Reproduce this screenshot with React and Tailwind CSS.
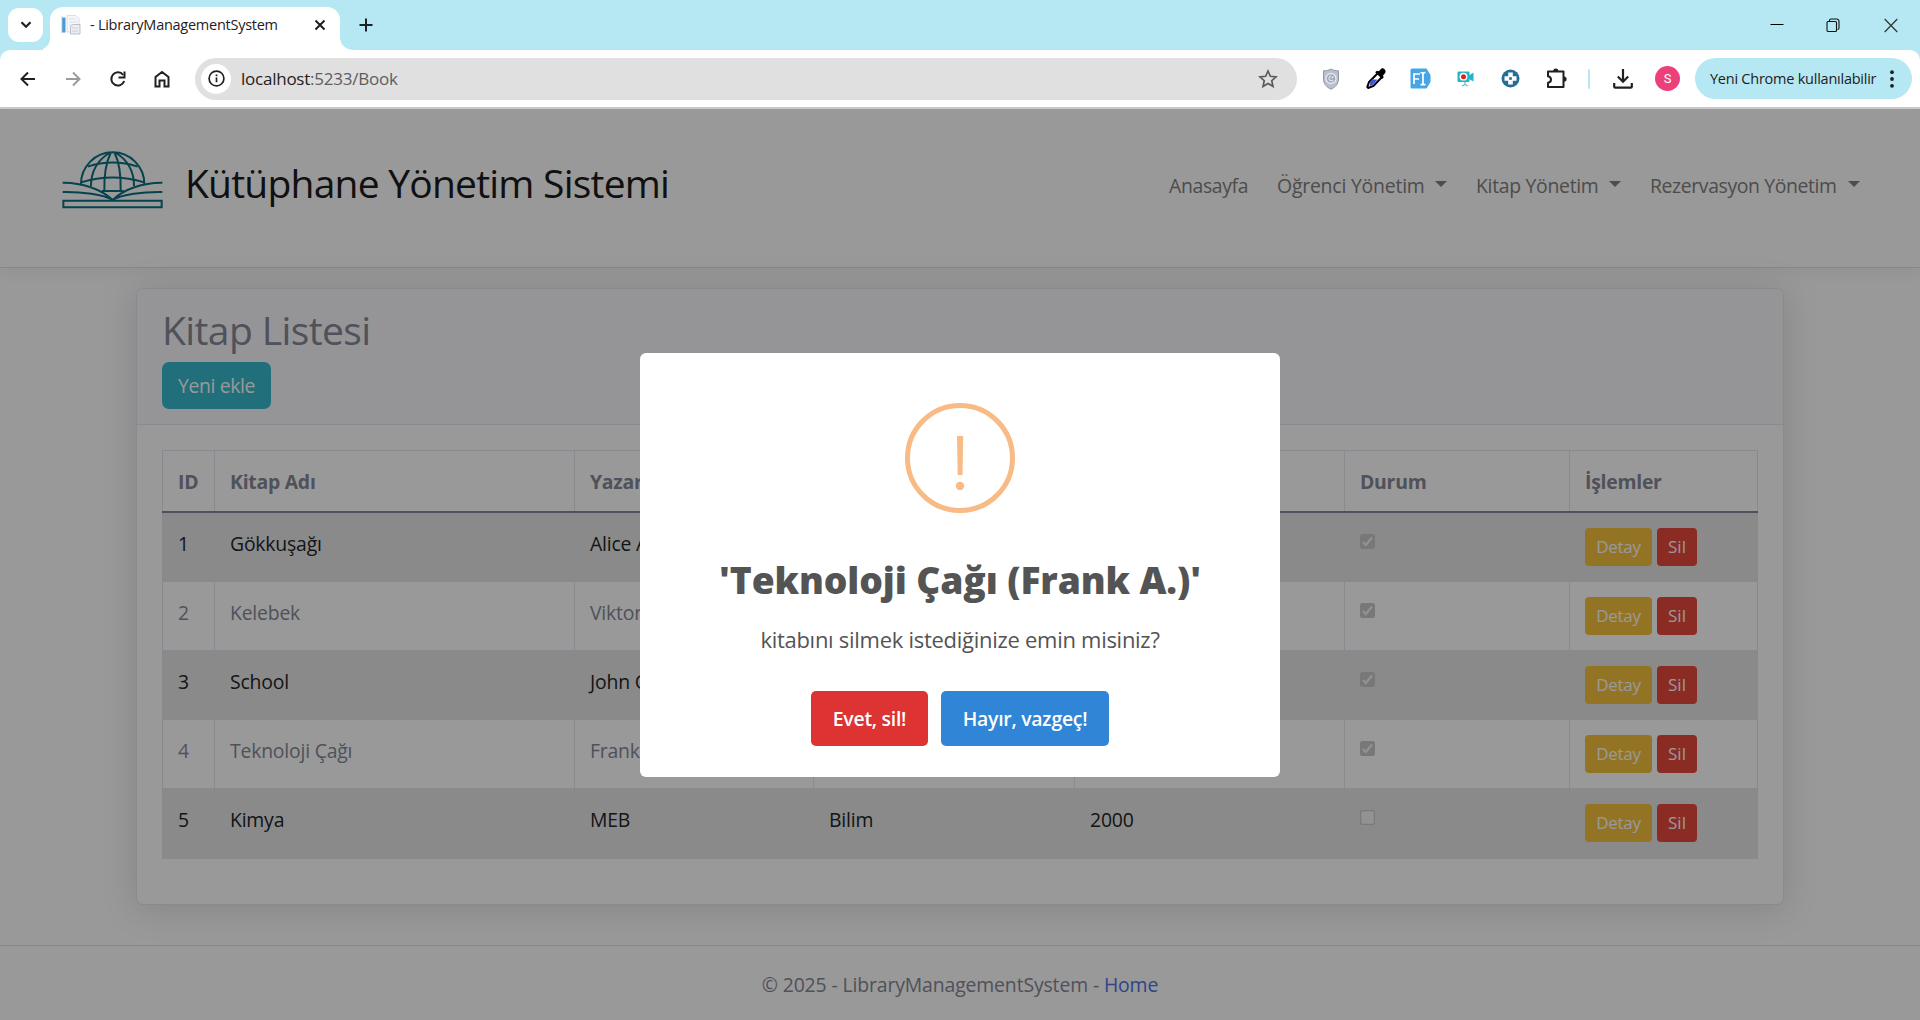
import React from "react";

const books = [
  { id: 1, title: "Gökkuşağı", author: "Alice A.", active: true },
  { id: 2, title: "Kelebek", author: "Viktor", active: true },
  { id: 3, title: "School", author: "John O.", active: true },
  { id: 4, title: "Teknoloji Çağı", author: "Frank", active: true },
  { id: 5, title: "Kimya", author: "MEB", genre: "Bilim", year: "2000", active: false },
];

function Cell({ children }) {
  return <div className="flex w-[45px] shrink-0 items-center justify-center">{children}</div>;
}

function TabStrip() {
  return (
    <div className="flex h-[50px] items-start bg-[#b5e8f3]">
      <div className="ml-2 mt-2 flex h-[34px] w-[35px] items-center justify-center rounded-[11px] bg-white">
        <svg width="12" height="8" viewBox="0 0 12 8" fill="none" stroke="#1f2023" strokeWidth="2.2">
          <path d="M1.5 1.3 6 5.8l4.5-4.5" />
        </svg>
      </div>
      <svg className="mt-[38px]" width="7" height="12" viewBox="0 0 7 12">
        <path d="M7 0v12H-6C2 12 7 7 7 0z" fill="#fff" />
      </svg>
      <div className="mt-[7px] flex h-[43px] w-[290px] items-center rounded-t-[13px] bg-white pb-[7px] pl-[11px]">
        <svg width="20" height="20" viewBox="0 0 20 20">
          <path d="M0 1h1.500v17H0z" fill="#dfe5ea" />
          <path d="M1.200 2.500h3.300v15H1.200z" fill="#4a9bd0" />
          <path d="M6 .5h9l3 3V17H6z" fill="#f6f7f9" stroke="#d3d7de" strokeWidth=".8" />
          <path d="M8 4h7M8 7h8M8 10h3" stroke="#dde0e5" strokeWidth="1" />
          <path d="M9.500 11.500 12 9.500h7V19H9.500z" fill="#eceef1" stroke="#b4bac4" strokeWidth=".9" />
          <path d="M11 13h6M11 16h6" stroke="#c9ced6" strokeWidth="1.200" />
        </svg>
        <span className="ml-[9px] w-[213px] whitespace-nowrap text-[14.5px] leading-5 tracking-[-0.26px] text-[#1f2023]">
          - LibraryManagementSystem
        </span>
        <svg className="ml-[11px]" width="12" height="12" viewBox="0 0 12 12" stroke="#1f2023" strokeWidth="2">
          <path d="m1.500 1.500 9 9M10.500 1.500l-9 9" />
        </svg>
      </div>
      <svg className="mt-[38px]" width="16" height="12" viewBox="0 0 16 12">
        <path d="M0 0v12h15C6 12 1 8 0 0z" fill="#fff" />
      </svg>
      <svg className="ml-[3px] mt-[18px]" width="14" height="14" viewBox="0 0 14 14" stroke="#1f2023" strokeWidth="2">
        <path d="M7 .5v13M.5 7h13" />
      </svg>
      <div className="ml-auto mr-[22px] mt-[17px] flex items-center text-[#222]">
        <svg width="14" height="16" viewBox="0 0 14 16" stroke="#000" strokeWidth="1">
          <path d="M.5 7.500h13" />
        </svg>
        <svg className="ml-[42px]" width="14" height="15" viewBox="0 0 14 15" fill="none" stroke="#111" strokeWidth="1.100">
          <rect x="1" y="3.500" width="9.500" height="10" rx="1" />
          <path d="M3.500 3.200V2.500a1.500 1.500 0 0 1 1.500-1.500h5.500a2.500 2.500 0 0 1 2.500 2.500V10a1.500 1.500 0 0 1-1.500 1.500" />
        </svg>
        <svg className="ml-[44px]" width="14" height="15" viewBox="0 0 14 15" stroke="#333" strokeWidth="1.200">
          <path d="m.7 1 12.600 13M13.300 1 .7 14" />
        </svg>
      </div>
    </div>
  );
}

function Toolbar() {
  return (
    <div className="bg-[#b5e8f3]">
      <div className="flex h-[57px] items-center rounded-t-[10px] bg-white pl-[5px] text-[#1f2023]">
        <Cell>
          <svg width="16" height="16" viewBox="0 0 16 16" fill="none" stroke="currentColor" strokeWidth="2">
            <path d="M15 8H2M8 1.500 1.500 8 8 14.500" />
          </svg>
        </Cell>
        <Cell>
          <svg width="16" height="16" viewBox="0 0 16 16" fill="none" stroke="#9b9b9d" strokeWidth="2">
            <path d="M1 8h13M8 1.500 14.500 8 8 14.500" />
          </svg>
        </Cell>
        <Cell>
          <svg width="18" height="18" viewBox="0 0 18 18" fill="none" stroke="currentColor" strokeWidth="2">
            <path d="M14.200 5A6.600 6.600 0 1 0 15.200 11" />
            <path d="M15.500 1.500v6h-6" />
          </svg>
        </Cell>
        <Cell>
          <svg className="mr-px" width="18" height="18" viewBox="0 0 18 18" fill="none" stroke="currentColor" strokeWidth="2">
            <path d="M2.500 16.500V7L9 2l6.500 5v9.500h-4v-6h-5v6z" />
          </svg>
        </Cell>
        <div className="ml-[10px] flex h-[42px] w-[1102px] items-center rounded-full bg-[#e0e0e0] pl-[6px] pr-[19px]">
          <div className="flex h-[30px] w-[30px] items-center justify-center rounded-full bg-white">
            <svg width="17" height="17" viewBox="0 0 17 17" fill="none" stroke="currentColor" strokeWidth="1.700">
              <circle cx="8.500" cy="8.500" r="7.400" />
              <path d="M8.500 7.500v4.800M8.500 4.500v1.700" />
            </svg>
          </div>
          <span className="ml-[10px] whitespace-nowrap text-[17px] leading-6 tracking-[-0.24px]">
            localhost<span className="text-[#5c5d60]">:5233/Book</span>
          </span>
          <svg className="ml-auto" width="20" height="20" viewBox="0 0 20 20" fill="none" stroke="#5a5b5e" strokeWidth="1.700">
            <path d="m10 2 2.350 5.300 5.650.55-4.250 3.850 1.250 5.700-5-3-5 3 1.250-5.700L2 7.850l5.650-.55z" />
          </svg>
        </div>
        <div className="ml-[11px] flex items-center">
          <Cell>
            <svg width="18" height="22" viewBox="0 0 18 22">
              <path d="M9 1c2.500 1.500 5 1.800 7.500 1.800V11c0 5-3.500 8.500-7.500 10.200C5 19.500 1.500 16 1.500 11V2.800C4 2.800 6.500 2.500 9 1z" fill="#b9bfcc" stroke="#9097a8" />
              <circle cx="9" cy="10.500" r="5" fill="#9fa8b8" stroke="#e6e9ee" strokeWidth="1.400" />
              <path d="M11.500 8.500 9.500 10.500M11 12a2.300 2.300 0 1 1-1.500-3.800" fill="none" stroke="#dfe3e9" strokeWidth="1.200" />
            </svg>
          </Cell>
          <Cell>
            <svg className="ml-px" width="21" height="21" viewBox="0 0 21 21">
              <path d="m12 5 4 4-8.500 9-5.200 2-1-1 1.700-5z" fill="#fff" stroke="#000" strokeWidth="2" />
              <path d="M6 11.500h5.500L7 16.800l-3.500 1.400.8-4z" fill="#3d56d6" />
              <path d="m9.200 4.200 1.600-1.500 2 .6 2.400-2.600c2-1.600 5.500 1.500 4 4.200L17 7.500l.6 2-1.500 1.600z" fill="#000" />
            </svg>
          </Cell>
          <Cell>
            <svg width="21" height="21" viewBox="0 0 21 21">
              <path d="M2 .5h14.500L20.500 7v7l-4 6.500H2A1.500 1.500 0 0 1 .5 19V2A1.500 1.500 0 0 1 2 .5z" fill="#45a5e6" />
              <path d="M4 16V6h6M4 11h5M10.500 4.500c2 0 2.500.5 2.500 1.500v9c0 1.200-.5 1.700-2.500 1.700M15.500 4.500c-2 0-2.500.5-2.500 1.500v9c0 1.200.5 1.700 2.500 1.700" fill="none" stroke="#fff" strokeWidth="1.700" />
            </svg>
          </Cell>
          <Cell>
            <svg className="mr-px" width="17" height="17" viewBox="0 0 17 17">
              <rect x=".5" y="1.500" width="12" height="10.500" rx="1" fill="#23b5cb" />
              <path d="m11 6 5.500-3.500V11.500L11 8.500z" fill="#23b5cb" />
              <circle cx="6.500" cy="6.700" r="3.900" fill="#fff" />
              <circle cx="6.500" cy="6.700" r="2.500" fill="#e02020" />
              <path d="M8 12v2.500M5 16l3-1.500 3 1.500" fill="none" stroke="#4fc0d0" strokeWidth="1.200" />
            </svg>
          </Cell>
          <Cell>
            <svg width="19" height="19" viewBox="0 0 19 19">
              <circle cx="9.500" cy="9.500" r="9" fill="#246d97" />
              <path d="M7.200 3.500h4.600v3.700h3.700v4.600h-3.700v3.700H7.200v-3.700H3.500V7.200h3.700z" fill="#fff" />
              <path d="M8.200 8.200h2.600v2.600H8.200z" fill="#246d97" />
            </svg>
          </Cell>
          <Cell>
            <svg className="ml-px" width="21" height="21" viewBox="0 0 21 21">
              <path d="M2 3.500h15.500v15.500H2v-4.200c2.200-.3 3-1.500 3-3.200s-1-3-3-3.400z" fill="none" stroke="#1f2023" strokeWidth="2" strokeLinejoin="round" />
              <path d="M7.200 3a2.600 2.600 0 0 1 5.200 0zM18 8.500a2.600 2.600 0 0 1 0 5.200z" fill="#1f2023" />
            </svg>
          </Cell>
        </div>
        <div className="ml-[10px] mr-[10px] h-5 w-[2px] rounded bg-[#b5e8f3]" />
        <Cell>
          <svg width="20" height="20" viewBox="0 0 20 20" fill="none" stroke="#1f2023" strokeWidth="2.200">
            <path d="M10 0v12.500M4.800 7.500 10 12.700l5.200-5.200M1.200 14v3.700q0 1 1 1h15.600q1 0 1-1V14" />
          </svg>
        </Cell>
        <Cell>
          <div className="flex h-[25px] w-[25px] items-center justify-center rounded-full bg-[#ec407a] font-[Roboto] text-[13px] leading-none text-white">
            S
          </div>
        </Cell>
        <div className="ml-[5px] flex h-[41px] w-[217px] items-center rounded-full bg-[#b5e8f3] pl-[15px]">
          <span className="w-[175px] whitespace-nowrap text-[14.5px] leading-5 tracking-[-0.24px]">Yeni Chrome kullanılabilir</span>
          <svg className="ml-[5px]" width="4" height="18" viewBox="0 0 4 18" fill="#1f2023">
            <circle cx="2" cy="2.200" r="1.900" />
            <circle cx="2" cy="9" r="1.900" />
            <circle cx="2" cy="15.800" r="1.900" />
          </svg>
        </div>
      </div>
      <div className="h-[2px] bg-[#cbcbcb]" />
    </div>
  );
}

function Logo() {
  return (
    <svg className="mb-[6px]" width="130" height="80" viewBox="0 0 390 240" fill="none" stroke="#0a7080" strokeWidth="6">
      <path d="M93 132a95 95 0 1 1 190 0" />
      <path d="M178 39c-36 22-55 56-55 99M182 39c-16 32-20 70-19 114M198 39c36 22 54 56 54 99M194 39c16 32 19 70 18 114" />
      <path d="M113 80q75-25 150 0M93 127q95-29 190 0M155 153h66" />
      <path d="M38 128c57-1 117 20 150 52M337 128c-57-1-117 20-149 52M38 156c57-1 122 7 150 24M337 156c-57-1-122 7-149 24" />
      <path d="M40 182h295v20H40z" />
    </svg>
  );
}

function Caret() {
  return <span className="mt-[-4px] border-x-[6px] border-t-[6px] border-x-transparent border-t-[#808080]" />;
}

function SiteHeader() {
  return (
    <header className="flex h-[159px] shrink-0 items-center border-b border-[#dee2e6] bg-white pl-[50px] pr-[60px] shadow-[0_5px_15px_rgba(0,0,0,0.05)]">
      <div className="flex items-center pb-[10px]">
        <Logo />
        <span className="ml-[5px] whitespace-nowrap text-[39px] leading-[60px] tracking-[-0.78px] text-[#1b1b1b]">
          Kütüphane Yönetim Sistemi
        </span>
      </div>
      <nav className="ml-auto flex gap-[29px] whitespace-nowrap pb-[4px] text-[19.4px] leading-[30px] tracking-[-0.3px] text-[#808080]">
        <span className="w-[79px] tracking-[-0.35px]">Anasayfa</span>
        <span className="flex w-[170px] items-center justify-between tracking-[-0.2px]">Öğrenci Yönetim<Caret /></span>
        <span className="flex w-[145px] items-center justify-between">Kitap Yönetim<Caret /></span>
        <span className="flex w-[210px] items-center justify-between tracking-[-0.38px]">Rezervasyon Yönetim<Caret /></span>
      </nav>
    </header>
  );
}

function StatusBox({ checked }) {
  return checked ? (
    <svg width="15" height="15" viewBox="0 0 15 15">
      <rect width="15" height="15" rx="2.500" fill="#c9c9c9" />
      <path d="m3 8 2.800 3L12 3.500" fill="none" stroke="#f3f3f3" strokeWidth="2.200" />
    </svg>
  ) : (
    <svg width="15" height="15" viewBox="0 0 15 15">
      <rect x=".6" y=".6" width="13.800" height="13.800" rx="2.200" fill="#f4f4f4" stroke="#cacaca" strokeWidth="1.200" />
    </svg>
  );
}

function BookTable() {
  return (
    <table className="w-[1596px] table-fixed border-collapse text-left text-[19.4px] leading-[30px] tracking-[-0.2px] text-[#858796]">
      <colgroup>
        <col className="w-[52px]" />
        <col className="w-[360px]" />
        <col className="w-[239px]" />
        <col className="w-[261px]" />
        <col className="w-[270px]" />
        <col className="w-[225px]" />
        <col />
      </colgroup>
      <thead>
        <tr className="h-[61px] border-b-2 border-b-[#858796]">
          {["ID", "Kitap Adı", "Yazar", "", "", "Durum", "İşlemler"].map((h, i) => (
            <th key={i} className="whitespace-nowrap border-x border-t border-[#e3e6f0] pb-0 pl-[15px] pt-[2px] font-bold tracking-[-0.25px]">
              {h}
            </th>
          ))}
        </tr>
      </thead>
      <tbody>
        {books.map((b) => (
          <tr key={b.id} className="h-[69px] border-b border-b-[#e3e6f0] align-top first:h-[70px] last:h-[70px] odd:bg-[#e6e6e6] odd:text-[#212529] [&>td]:border-x [&>td]:border-[#e3e6f0] odd:[&>td]:border-[#e5e5e8]">
            <td className="pl-[15px] pt-[16px]">{b.id}</td>
            <td className="pl-[15px] pt-[16px]">{b.title}</td>
            <td className="pl-[15px] pt-[16px]">{b.author}</td>
            <td className="pl-[15px] pt-[16px]">{b.genre}</td>
            <td className="pl-[15px] pt-[16px]">{b.year}</td>
            <td className="pl-[15px] pt-[21px]"><StatusBox checked={b.active} /></td>
            <td className="pl-[15px] pt-[15px]">
              <div className="flex gap-[5px] text-[17px] leading-[26px] tracking-[-0.25px] text-white">
                <span className="flex h-[38px] w-[67px] items-center justify-center rounded-[4px] bg-[#f6c23e]">Detay</span>
                <span className="flex h-[38px] w-[40px] items-center justify-center rounded-[4px] bg-[#e74a3b] tracking-normal">Sil</span>
              </div>
            </td>
          </tr>
        ))}
      </tbody>
    </table>
  );
}

function BookCard() {
  return (
    <section className="mx-[136px] mt-[20px] h-[617px] shrink-0 rounded-[7px] border border-[#e3e6f0] bg-white shadow-[0_3px_35px_rgba(58,59,69,0.18)]">
      <div className="h-[136px] rounded-t-[6px] border-b border-[#e3e6f0] bg-[#f8f9fc] pl-[25px] pt-[17px]">
        <h2 className="text-[39px] leading-[48px] tracking-[-0.6px] text-[#858796]">Kitap Listesi</h2>
        <button className="mt-[8px] flex h-[47px] w-[109px] items-center justify-center rounded-[7px] bg-[#36b9cc] text-[19.4px] leading-[30px] tracking-[-0.4px] text-white">
          Yeni ekle
        </button>
      </div>
      <div className="pl-[25px] pt-[25px]">
        <BookTable />
      </div>
    </section>
  );
}

function ConfirmDialog() {
  return (
    <div className="absolute inset-0 flex items-center justify-center bg-black/40 pt-[1px]">
      <div className="flex h-[424px] w-[640px] flex-col items-center rounded-[6px] bg-white text-[#545454]">
        <div className="mt-[50px] flex h-[110px] w-[110px] items-center justify-center rounded-full border-[5px] border-[#f8bb86] pt-[8px]">
          <svg width="10" height="55" viewBox="0 0 10 55" fill="#f8bb86">
            <path d="M2 1h6.200l-.7 39H2.700z" />
            <circle cx="5" cy="51" r="4.200" />
          </svg>
        </div>
        <h2 className="mt-[39px] whitespace-nowrap text-[37.2px] font-extrabold leading-[56px] tracking-[-0.12px]">
          'Teknoloji Çağı (Frank A.)'
        </h2>
        <p className="mt-[14px] whitespace-nowrap text-[22px] leading-[34px] tracking-[-0.28px]">
          kitabını silmek istediğinize emin misiniz?
        </p>
        <div className="mt-[35px] flex gap-[13px] text-[19.4px] leading-[30px] tracking-[-0.25px] text-white">
          <button className="h-[55px] w-[117px] rounded-[5px] bg-[#dd3333] font-semibold">Evet, sil!</button>
          <button className="h-[55px] w-[168px] rounded-[5px] bg-[#3085d6] font-semibold">Hayır, vazgeç!</button>
        </div>
      </div>
    </div>
  );
}

export default function App() {
  return (
    <div className="flex h-[1020px] w-[1920px] flex-col overflow-hidden bg-white font-['Open_Sans','Noto_Sans',sans-serif]">
      <TabStrip />
      <Toolbar />
      <div className="relative flex h-[911px] flex-col bg-white">
        <SiteHeader />
        <BookCard />
        <footer className="mt-[40px] flex grow items-start justify-center border-t border-[#dee2e6] pt-[24px]">
          <span className="whitespace-nowrap text-[19.4px] leading-[30px] tracking-[-0.13px] text-[#858796]">
            © 2025 - LibraryManagementSystem - <a className="text-[#4e73df]">Home</a>
          </span>
        </footer>
        <ConfirmDialog />
      </div>
    </div>
  );
}
